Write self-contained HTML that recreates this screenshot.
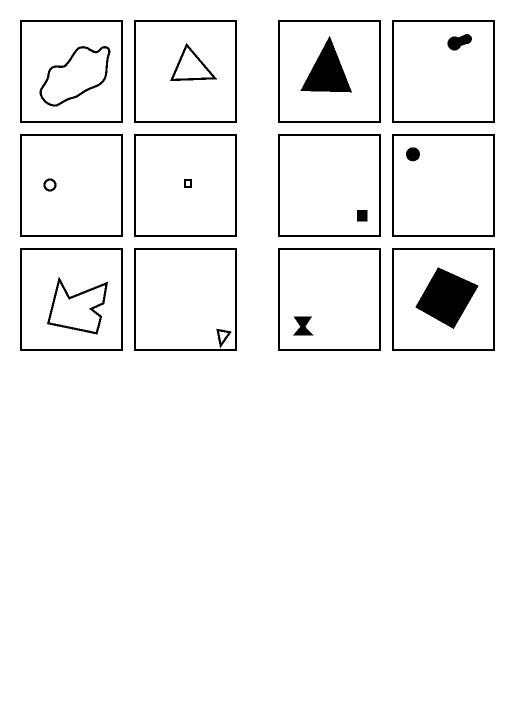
<!DOCTYPE html>
<html><head><style>html,body{margin:0;padding:0;background:#fff;width:526px;height:704px;overflow:hidden}</style></head>
<body>
<svg width="526" height="704" viewBox="0 0 526 704" xmlns="http://www.w3.org/2000/svg" shape-rendering="crispEdges">
<g fill="none" stroke="#000" stroke-width="2">
<rect x="21" y="21" width="101" height="101"/>
<rect x="135" y="21" width="101" height="101"/>
<rect x="279" y="21" width="101" height="101"/>
<rect x="393" y="21" width="101" height="101"/>
<rect x="21" y="135" width="101" height="101"/>
<rect x="135" y="135" width="101" height="101"/>
<rect x="279" y="135" width="101" height="101"/>
<rect x="393" y="135" width="101" height="101"/>
<rect x="21" y="249" width="101" height="101"/>
<rect x="135" y="249" width="101" height="101"/>
<rect x="279" y="249" width="101" height="101"/>
<rect x="393" y="249" width="101" height="101"/>
</g>
<g fill="none" stroke="#000" stroke-width="2.2">
<path d="M41,90 C44,84 48,81 48.3,76 C49,70 51,67 55,66.7 C59,66 62,68 65,66 C70,62 74,52 78.3,48.3 C81,47 84,47 87,48 C91,50 94,53 97,52 C100,51 101,47 104,47.3 C108,47 110,49 109,54 C107,58 107,64 106.5,70 C106,77 105,80 100,84 C96,87 90,88 85,91 C80,94 78,97 72,98 C66,99 62,103 56.7,105.5 C52,106 47,104 44,100 C41,97 40,93 41,90 Z"/>
<polygon points="186.7,45 171.7,80 215,78.3"/>
<circle cx="50" cy="185" r="5.5"/>
<rect x="185" y="180" width="6" height="7"/>
<polygon points="59.3,279.3 69.3,298.3 106.7,283.3 103.3,303.3 91,309 101,316.7 96.7,333.3 48.3,323.3"/>
<polygon points="217.7,330 230,332.3 220.7,345.7"/>
</g>
<g fill="#000">
<polygon points="329.7,35.7 300.3,91 352,92.3"/>
<circle cx="454.5" cy="43.5" r="7"/>
<circle cx="467" cy="39" r="5"/>
<polygon points="454,39 467,34 467,44 454,48"/>
<rect x="357" y="210" width="10.5" height="11.5"/>
<circle cx="413" cy="154.3" r="7"/>
<polygon points="293.7,316.7 312,316.7 305.3,326.7 313.7,335.7 292.7,335.7 300.3,326.7"/>
<polygon points="438,267.3 478.7,285.7 453.7,329 415.3,307.3"/>
</g>
</svg>
</body></html>
